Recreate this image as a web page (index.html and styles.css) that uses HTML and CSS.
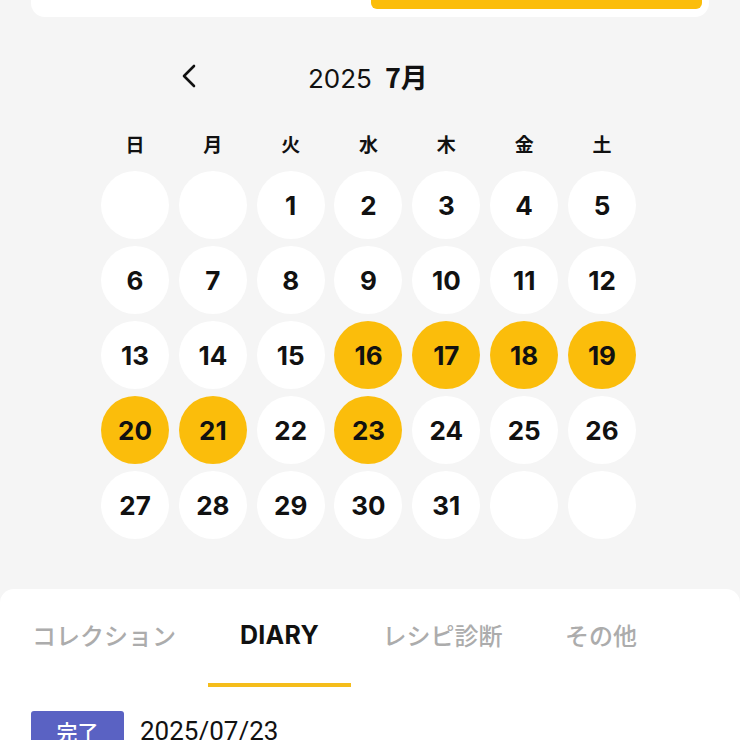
FILE: index.html
```html
<!DOCTYPE html>
<html lang="ja">
<head>
<meta charset="utf-8">
<link rel="stylesheet" href="styles.css">
</head>
<body>
<div class="topcard"><div class="topbar"></div></div>

<div class="calendar">
  <div class="cal-head">
    <svg class="prev" width="16" height="24" viewBox="0 0 16 24"><path d="M13 2 L3 12 L13 22" fill="none" stroke="#111" stroke-width="2.6" stroke-linecap="round" stroke-linejoin="round"/></svg>
    <div class="title"><span class="year">2025</span><span class="month">7月</span></div>
  </div>
  <div class="weekdays">
    <span>日</span><span>月</span><span>火</span><span>水</span><span>木</span><span>金</span><span>土</span>
  </div>
  <div class="days">
    <div class="day"></div><div class="day"></div>
    <div class="day">1</div><div class="day">2</div><div class="day">3</div><div class="day">4</div><div class="day">5</div>
    <div class="day">6</div><div class="day">7</div><div class="day">8</div><div class="day">9</div><div class="day">10</div><div class="day">11</div><div class="day">12</div>
    <div class="day">13</div><div class="day">14</div><div class="day">15</div><div class="day on">16</div><div class="day on">17</div><div class="day on">18</div><div class="day on">19</div>
    <div class="day on">20</div><div class="day on">21</div><div class="day">22</div><div class="day on">23</div><div class="day">24</div><div class="day">25</div><div class="day">26</div>
    <div class="day">27</div><div class="day">28</div><div class="day">29</div><div class="day">30</div><div class="day">31</div><div class="day"></div><div class="day"></div>
  </div>
</div>

<div class="panel">
  <div class="tabs">
    <div class="tab t1">コレクション</div>
    <div class="tab t2 active">DIARY</div>
    <div class="tab t3">レシピ診断</div>
    <div class="tab t4">その他</div>
  </div>
  <div class="entry">
    <span class="badge">完了</span>
    <span class="date">2025/07/23</span>
  </div>
</div>
</body>
</html>
```

FILE: styles.css
```css
* { box-sizing: border-box; }
html, body { margin: 0; padding: 0; }
body {
  width: 740px;
  height: 740px;
  overflow: hidden;
  background: #f5f5f5;
  font-family: Inter, "Noto Sans CJK JP", sans-serif;
  color: #111;
}
.topcard {
  margin: 0 31px;
  height: 17px;
  background: #fff;
  border-radius: 0 0 14px 14px;
  display: flex;
  justify-content: flex-end;
  padding-right: 7px;
}
.topbar {
  width: 331px;
  height: 9px;
  background: #fbbd0b;
  border-radius: 0 0 6px 6px;
}
.calendar {
  padding-left: 101px;
  width: 640px;
}
.cal-head {
  display: flex;
  align-items: center;
  margin-top: 31px;
  height: 56px;
}
.prev { margin-left: 80px; }
.title {
  margin-left: 111px;
  font-size: 26px;
  display: flex;
  align-items: baseline;
  gap: 13px;
}
.year { font-weight: 400; }
.month { font-weight: 700; font-family: "Noto Sans CJK JP", sans-serif; font-size: 27px; }
.weekdays {
  display: grid;
  grid-template-columns: repeat(7, 68px);
  column-gap: 9.83px;
  margin-top: 27px;
  font-family: "Noto Sans CJK JP", sans-serif;
  font-weight: 700;
  font-size: 19px;
  line-height: 26px;
  text-align: center;
}
.days {
  margin-top: 14px;
  display: grid;
  grid-template-columns: repeat(7, 68px);
  grid-auto-rows: 68px;
  column-gap: 9.83px;
  row-gap: 7px;
}
.day {
  width: 68px;
  height: 68px;
  border-radius: 50%;
  background: #fff;
  display: flex;
  align-items: center;
  justify-content: center;
  font-size: 26px;
  font-weight: 700;
}
.day.on { background: #fbbd0b; }
.panel {
  margin-top: 50px;
  background: #fff;
  border-radius: 14px 14px 0 0;
  height: 160px;
}
.tabs {
  display: flex;
  padding-top: 29px;
}
.tab {
  font-family: "Noto Sans CJK JP", sans-serif;
  font-size: 24px;
  line-height: 34px;
  color: #acacac;
  font-weight: 500;
  height: 69px;
  text-align: center;
  white-space: nowrap;
  border-bottom: 4px solid transparent;
}
.t1 { width: 208px; }
.t2 { width: 143px; }
.t3 { width: 183px; }
.t4 { width: 134px; }
.tab.active {
  color: #111;
  font-weight: 700;
  font-family: Inter, sans-serif;
  font-size: 25px;
  letter-spacing: 0.3px;
  border-bottom-color: #f5bd1b;
}
.entry {
  display: flex;
  align-items: center;
  padding-left: 31px;
  margin-top: 23px;
  gap: 16px;
}
.badge {
  width: 93px;
  height: 34px;
  background: #5a62c3;
  border-radius: 3px;
  color: #fff;
  font-family: "Noto Sans CJK JP", sans-serif;
  font-size: 21px;
  font-weight: 500;
  display: flex;
  align-items: center;
  justify-content: center;
  padding-top: 6px;
}
.date {
  font-size: 26px;
  font-family: Roboto, sans-serif;
  font-weight: 400;
  padding-top: 6px;
}
```
